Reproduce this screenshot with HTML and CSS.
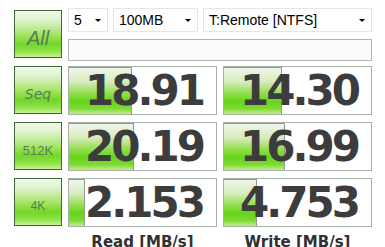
FILE: index.html
```html
<!DOCTYPE html>
<html lang="en">
<head>
    <meta charset="UTF-8">
    <title>CrystalDiskMark</title>
    <link rel="stylesheet" href="styles.css">
</head>
<body>
    <div class="bench">
        <div class="test-btn label-all">All</div>
        <div class="controls">
            <div class="combos">
                <div class="combo combo-count">5<span class="arrow"></span></div>
                <div class="combo combo-size">100MB<span class="arrow"></span></div>
                <div class="combo combo-drive">T:Remote [NTFS]<span class="arrow"></span></div>
            </div>
            <div class="status"></div>
        </div>

        <div class="test-btn label-seq">Seq</div>
        <div class="result"><div class="meter" style="width: 63px"></div><span class="value">18.91</span></div>
        <div class="result"><div class="meter" style="width: 58px"></div><span class="value">14.30</span></div>

        <div class="test-btn label-512">512K</div>
        <div class="result"><div class="meter" style="width: 65px"></div><span class="value">20.19</span></div>
        <div class="result"><div class="meter" style="width: 61px"></div><span class="value">16.99</span></div>

        <div class="test-btn label-4k">4K</div>
        <div class="result"><div class="meter" style="width: 16px"></div><span class="value">2.153</span></div>
        <div class="result"><div class="meter" style="width: 33px"></div><span class="value">4.753</span></div>

        <div></div>
        <div class="caption">Read [MB/s]</div>
        <div class="caption">Write [MB/s]</div>
    </div>
</body>
</html>
```

FILE: styles.css
```css
body {
    margin: 0;
    background-color: #ffffff;
    font-family: "Liberation Sans", Arial, sans-serif;
}
.bench {
    display: grid;
    grid-template-columns: 48px 149px 149px;
    grid-template-rows: 48px 48px 48px 48px auto;
    column-gap: 6px;
    row-gap: 8px;
    padding: 10px 0 0 14px;
}
.test-btn {
    box-sizing: border-box;
    border: 1px solid #3d6b35;
    background: linear-gradient(to bottom, #f4f9ee 0%, #d8f0c0 25%, #9ae256 55%, #72d628 72%, #8ee24a 88%, #c6f28e 100%);
    color: #587c56;
    display: flex;
    justify-content: center;
    align-items: center;
    padding-top: 8px;
}
.label-all {
    font-size: 20px;
    font-style: italic;
}
.label-seq {
    font-family: "DejaVu Sans", sans-serif;
    font-style: italic;
    font-size: 14px;
}
.label-512 {
    font-size: 13px;
}
.label-4k {
    font-size: 12px;
}
.controls {
    grid-column: 2 / 4;
    display: flex;
    flex-direction: column;
    gap: 7px;
    margin: -2px 0 -3px 0;
}
.combos {
    display: flex;
    gap: 5px;
}
.combo {
    box-sizing: border-box;
    height: 24px;
    border: 1px solid #e4e6ea;
    display: flex;
    align-items: center;
    padding-left: 5px;
    font-size: 14px;
    color: #000000;
    position: relative;
}
.combo-count {
    width: 40px;
}
.combo-size {
    width: 85px;
}
.combo-drive {
    flex: 1;
}
.arrow {
    position: absolute;
    right: 6px;
    top: 10px;
    border-left: 3px solid transparent;
    border-right: 3px solid transparent;
    border-top: 3px solid #000000;
}
.status {
    box-sizing: border-box;
    height: 22px;
    border: 1px solid #b4b4b4;
    background-color: #fbfbfb;
}
.result {
    box-sizing: border-box;
    height: 49px;
    border: 1px solid #a9b0a9;
    position: relative;
    display: flex;
    align-items: center;
    justify-content: center;
    overflow: hidden;
}
.meter {
    position: absolute;
    left: 0;
    top: 0;
    bottom: 0;
    box-sizing: border-box;
    border-top: 1px solid #8f9c8f;
    border-right: 1px solid #8f9c8f;
    background: linear-gradient(to bottom, #f0f6ea 0%, #d6ecbe 30%, #92de4c 55%, #66d41a 72%, #7ed832 88%, #c2ee8c 100%);
}
.value {
    position: relative;
    font-family: "DejaVu Sans", Verdana, sans-serif;
    font-weight: bold;
    font-size: 42px;
    letter-spacing: -3px;
    color: #3c3c3c;
    padding-left: 3px;
}
.caption {
    text-align: center;
    font-family: "DejaVu Sans", Verdana, sans-serif;
    font-weight: bold;
    font-size: 15px;
    color: #303030;
    margin-top: -1px;
}
```
